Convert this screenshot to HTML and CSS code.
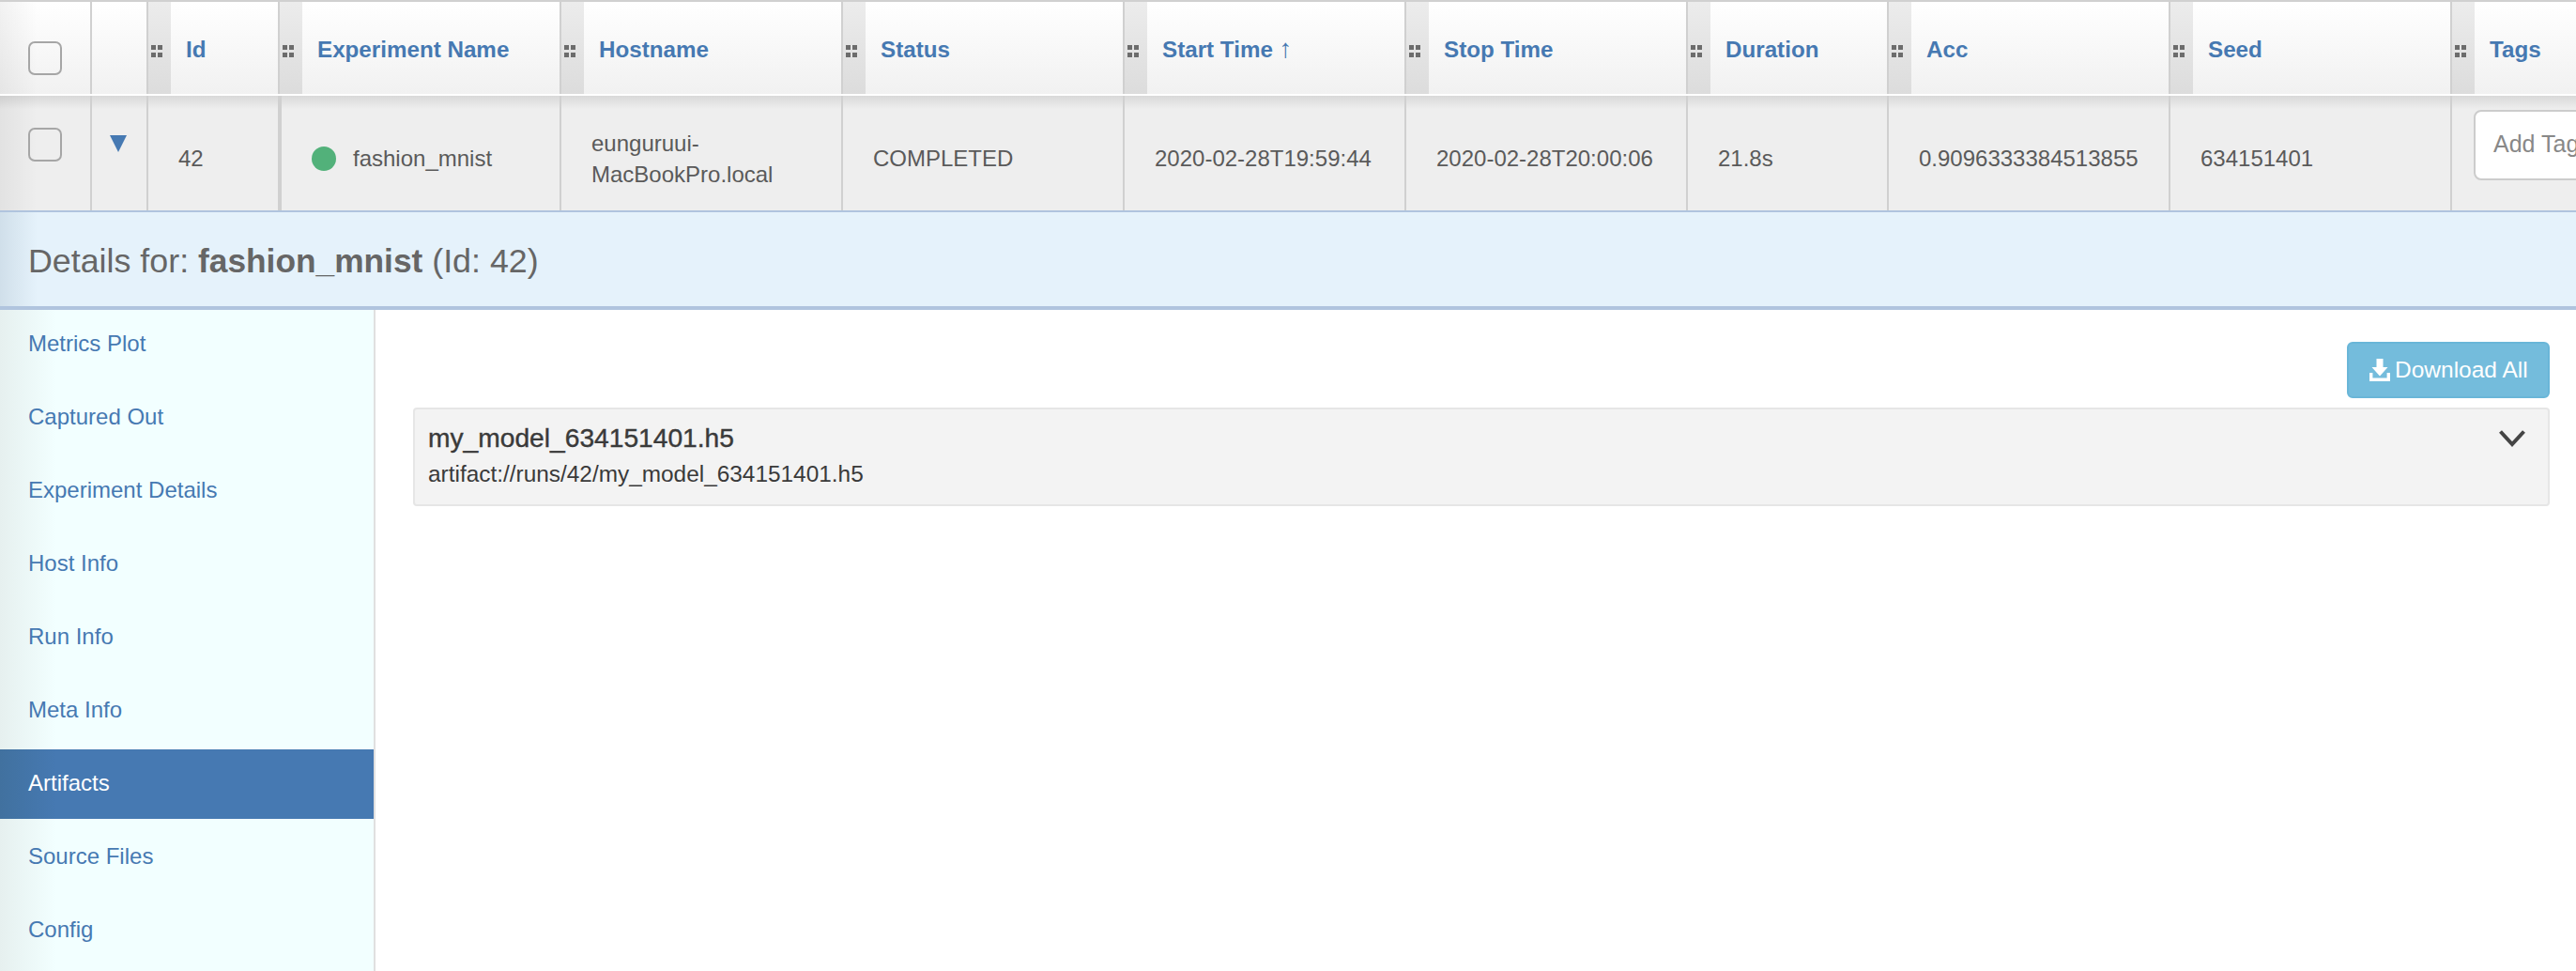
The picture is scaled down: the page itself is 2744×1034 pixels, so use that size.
FILE: index.html
```html
<!DOCTYPE html>
<html lang="en">
<head>
<meta charset="utf-8">
<title>Experiment details</title>
<link rel="stylesheet" href="styles.css">
</head>
<body>
<main class="page">
  <div class="grid head">
    <div class="hcell first"><span class="check"></span></div>
    <div class="hcell"></div>
    <div class="hcell"><span class="grip"></span><span class="label">Id</span></div>
    <div class="hcell"><span class="grip"></span><span class="label">Experiment Name</span></div>
    <div class="hcell"><span class="grip"></span><span class="label">Hostname</span></div>
    <div class="hcell"><span class="grip"></span><span class="label">Status</span></div>
    <div class="hcell"><span class="grip"></span><span class="label">Start Time <span class="sort">↑</span></span></div>
    <div class="hcell"><span class="grip"></span><span class="label">Stop Time</span></div>
    <div class="hcell"><span class="grip"></span><span class="label">Duration</span></div>
    <div class="hcell"><span class="grip"></span><span class="label">Acc</span></div>
    <div class="hcell"><span class="grip"></span><span class="label">Seed</span></div>
    <div class="hcell"><span class="grip"></span><span class="label">Tags</span></div>
  </div>
  <div class="grid row">
    <div class="cell first tool"><span class="check"></span></div>
    <div class="cell tool arrow-cell">
      <svg class="arrow" viewBox="0 0 18 18" width="18" height="18"><path d="M0 0H18L9 18Z"/></svg>
    </div>
    <div class="cell">42</div>
    <div class="cell name"><span class="dot"></span>fashion_mnist</div>
    <div class="cell">eunguruui-<br>MacBookPro.local</div>
    <div class="cell">COMPLETED</div>
    <div class="cell">2020-02-28T19:59:44</div>
    <div class="cell">2020-02-28T20:00:06</div>
    <div class="cell">21.8s</div>
    <div class="cell">0.9096333384513855</div>
    <div class="cell">634151401</div>
    <div class="cell tags"><div class="tag-input">Add Tags</div></div>
  </div>
  <header class="details-bar">Details for: <strong class="run-name">fashion_mnist</strong> (Id: 42)</header>
  <div class="details">
    <nav class="side">
      <a class="side-item">Metrics Plot</a>
      <a class="side-item">Captured Out</a>
      <a class="side-item">Experiment Details</a>
      <a class="side-item">Host Info</a>
      <a class="side-item">Run Info</a>
      <a class="side-item">Meta Info</a>
      <a class="side-item active">Artifacts</a>
      <a class="side-item">Source Files</a>
      <a class="side-item">Config</a>
    </nav>
    <section class="content">
      <div class="actions">
        <button class="download" type="button">
          <svg class="dl-icon" viewBox="0 0 22 24" width="22" height="24"><path d="M7.5 0H14.5V9H19.5L11 18.5 2.5 9H7.5ZM0 15H3.4V20.6H18.6V15H22V24H0Z"/></svg>
          Download All
        </button>
      </div>
      <article class="artifact">
        <div>
          <div class="artifact-name">my_model_634151401.h5</div>
          <div class="artifact-path">artifact://runs/42/my_model_634151401.h5</div>
        </div>
        <svg class="chevron" viewBox="0 0 28 18" width="28" height="18"><path d="M1.5 1.5L14 15 26.5 1.5"/></svg>
      </article>
    </section>
  </div>
</main>
</body>
</html>
```

FILE: styles.css
```css
* { box-sizing: border-box; }
html, body { margin: 0; height: 100%; }
body {
  overflow: hidden;
  background: #fff;
  color: #5a5a5a;
  font-family: "Liberation Sans", Arial, sans-serif;
  font-size: 24px;
}
.page {
  display: flex;
  flex-direction: column;
  height: 100vh;
  width: 2744px;
  overflow: hidden;
  border-top: 2px solid #d0d0d0;
}
.grid {
  display: grid;
  grid-template-columns: 96px 60px 140px 300px 300px 300px 300px 300px 214px 300px 300px 134px;
}
.head { height: 98px; margin-bottom: 2px; }
.hcell {
  display: flex;
  min-width: 0;
  overflow: hidden;
  border-left: 2px solid #d0d0d0;
  background: linear-gradient(#fff, #f1f1f1);
}
.hcell.first {
  border-left: 0;
  background: linear-gradient(90deg, rgba(0,0,0,.05), transparent 40px), linear-gradient(#fff, #f1f1f1);
}
.grip {
  position: relative;
  flex: 0 0 24px;
  background: linear-gradient(#ececec, #dcdcdc);
}
.grip::before {
  content: "";
  position: absolute;
  left: 3px;
  top: 46px;
  width: 5px;
  height: 5px;
  background: #6c6c6c;
  box-shadow: 7px 0 #6c6c6c, 0 8px #6c6c6c, 7px 8px #6c6c6c;
}
.label {
  padding: 36px 0 0 16px;
  color: #4679b2;
  font-weight: 700;
  font-size: 24.2px;
  line-height: 29px;
  white-space: nowrap;
}
.sort { font-weight: 400; font-size: 28px; line-height: 20px; }
.check {
  display: block;
  width: 36px;
  height: 36px;
  margin: 42px 0 0 30px;
  border: 2px solid #a6a6a6;
  border-radius: 7px;
  background: transparent;
}
.row { height: 122px; }
.cell {
  display: flex;
  flex-wrap: wrap;
  align-content: center;
  align-items: center;
  padding: 11px 8px 0 32px;
  overflow: hidden;
  border-left: 2px solid #d0d0d0;
  background: linear-gradient(#d9d9d9, #eeeeee 14px);
  line-height: 33px;
  white-space: nowrap;
}
.cell.first {
  border-left: 0;
  background: linear-gradient(90deg, rgba(0,0,0,.05), transparent 40px), linear-gradient(#d9d9d9, #eeeeee 14px);
}
.cell.tool { display: block; align-content: start; padding: 0; }
.cell.tool .check { margin-top: 34px; }
.arrow-cell .arrow { display: block; margin: 42px 0 0 19px; fill: #4679b2; }
.cell.name { border-left-width: 4px; padding-left: 32px; }
.dot {
  flex: none;
  width: 26px;
  height: 26px;
  margin-right: 18px;
  border-radius: 50%;
  background: #52b17a;
}
.cell br { display: block; }
.cell.tags { display: block; align-content: start; padding: 15px 0 0 23px; }
.tag-input {
  width: 200px;
  height: 75px;
  padding-left: 19px;
  border: 2px solid #ccc;
  border-radius: 8px;
  background: #fff;
  color: #888;
  font-size: 25px;
  line-height: 68px;
}
.details-bar {
  flex: none;
  height: 106px;
  padding-left: 30px;
  border-top: 2px solid #b0c4de;
  border-bottom: 4px solid #b0c4de;
  background: linear-gradient(90deg, #d0dfea, #e5f2fb 40px);
  color: #666;
  font-size: 35.8px;
  line-height: 104px;
}
.run-name { font-size: 35.3px; }
.details { flex: 1; display: flex; min-height: 0; }
.side {
  flex: 0 0 400px;
  display: flex;
  flex-direction: column;
  gap: 4px;
  border-right: 2px solid #e0e0e0;
  background: linear-gradient(90deg, #e6f0ef, #f2ffff 60px);
}
.side-item {
  height: 74px;
  padding-left: 30px;
  color: #4679b2;
  font-size: 24px;
  line-height: 71px;
}
.side-item.active {
  background: linear-gradient(90deg, #41719f, #4679b2 60px);
  color: #fff;
}
.content { flex: 1; padding: 34px 28px 0 40px; }
.actions { display: flex; justify-content: flex-end; margin-bottom: 10px; }
.download {
  display: flex;
  align-items: center;
  gap: 5px;
  width: 216px;
  height: 60px;
  padding: 0 0 0 22px;
  border: 2px solid #69b6d8;
  border-radius: 6px;
  background: #74bcdc;
  color: #fff;
  font: 24.5px/1 "Liberation Sans", Arial, sans-serif;
}
.dl-icon { flex: none; fill: #fff; }
.artifact {
  display: flex;
  justify-content: space-between;
  height: 105px;
  padding: 13px 24px 0 14px;
  border: 2px solid #e6e6e6;
  border-radius: 4px;
  background: #f3f3f3;
  color: #3a3a3a;
}
.artifact-name {
  font-size: 28.2px;
  line-height: 34px;
  -webkit-text-stroke: .4px #3a3a3a;
}
.artifact-path { margin-top: 7px; font-size: 24.4px; line-height: 30px; }
.chevron {
  flex: none;
  margin-top: 9px;
  fill: none;
  stroke: #444;
  stroke-width: 4;
}
```
